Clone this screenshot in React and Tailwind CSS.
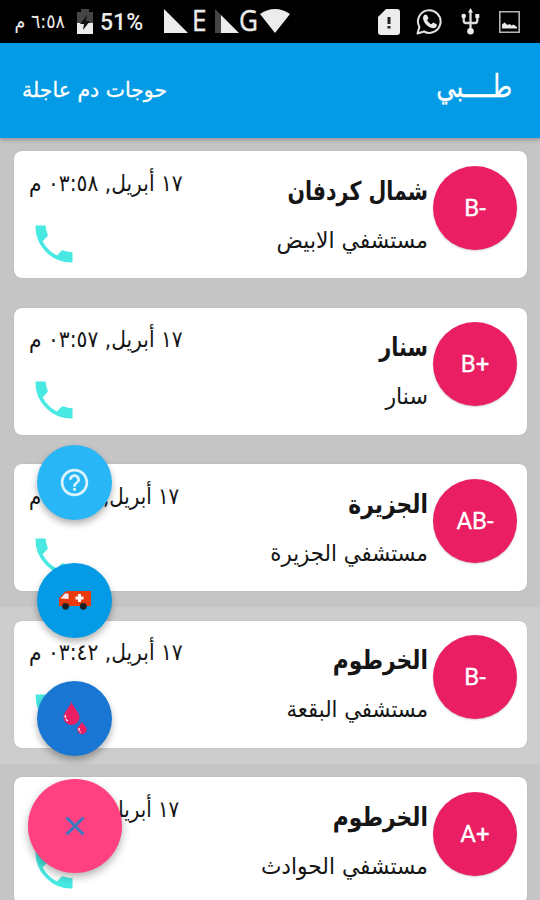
import React from 'react';
import { MdHelpOutline } from 'react-icons/md';

const requests = [
  { type: 'B-', state: 'شمال كردفان', stateFit: 'scale-x-[0.79]', hospital: 'مستشفي الابيض', hospitalFit: 'scale-x-[0.95]', date: '١٧ أبريل, ٠٣:٥٨ م' },
  { type: 'B+', state: 'سنار', stateFit: 'scale-x-[0.8]', hospital: 'سنار', hospitalFit: 'scale-x-[0.96]', date: '١٧ أبريل, ٠٣:٥٧ م' },
  { type: 'AB-', state: 'الجزيرة', stateFit: 'scale-x-[0.84]', hospital: 'مستشفي الجزيرة', hospitalFit: 'scale-x-[0.925]', date: '١٧ أبريل, ٠٣:٤٥ م', dateFit: 'scale-x-[0.86]' },
  { type: 'B-', state: 'الخرطوم', stateFit: 'scale-x-[0.84]', hospital: 'مستشفي البقعة', hospitalFit: 'scale-x-[0.92]', date: '١٧ أبريل, ٠٣:٤٢ م', pressed: true },
  { type: 'A+', state: 'الخرطوم', stateFit: 'scale-x-[0.84]', hospital: 'مستشفي الحوادث', hospitalFit: 'scale-x-[0.945]', date: '١٧ أبريل, ٠٣:٤٠ م', dateFit: 'scale-x-[0.86]' },
];

const BatteryIcon = () => (
  <svg width="18" height="26" viewBox="0 0 18 26" className="ml-[11px]">
    <path d="M5 0h8v3h4v11H1V3h4z" fill="#454545" />
    <path d="M1 14h16v11H1z" fill="#ececec" />
    <path d="M11 6 4 15h4l-1 6 7-9h-4z" fill="#111" />
  </svg>
);

const SignalIcon = () => (
  <svg width="24" height="24" viewBox="0 0 24 24" className="-mt-[2px] ml-[20px]">
    <path d="M0 0v24h24z" fill="#ececec" />
  </svg>
);

const WeakSignalIcon = () => (
  <svg width="24" height="24" viewBox="0 0 24 24" className="-mt-[2px] ml-[8px]">
    <path d="M0 0v24h6V6z" fill="#454545" />
    <path d="M6 6v18h18z" fill="#ececec" />
  </svg>
);

const WifiIcon = () => (
  <svg width="30" height="24" viewBox="0 0 30 24" className="-mt-[1px] -ml-[3px]">
    <path d="M0 5Q15-5 30 5L15 24z" fill="#ececec" />
  </svg>
);

const SimAlertIcon = () => (
  <svg width="22" height="26" viewBox="0 0 22 26">
    <path d="M8 0h11q3 0 3 3v20q0 3-3 3H3q-3 0-3-3V8z" fill="#ececec" />
    <path d="M9.500 8h3v7h-3zM9.500 17h3v2.500h-3z" fill="#222" />
  </svg>
);

const WhatsAppIcon = () => (
  <svg width="27" height="27" viewBox="0 0 27 27" className="ml-[16px]">
    <path d="M1.500 25.500 3.400 19A11.300 11.300 0 1 1 8 23.500z" fill="none" stroke="#e4e4e4" strokeWidth="2" strokeLinejoin="round" />
    <path d="M8.500 6.800h2.300l1.700 3.500-1.500 2q1.500 2.600 4.300 4l1.900-1.800 3.500 1.700v2.200q-1.400 2-3.800 1.800-7.400-1.500-9.900-9.300-.3-2.600 1.500-4.100z" fill="#ececec" />
  </svg>
);

const UsbIcon = () => (
  <svg width="19" height="27" viewBox="0 0 19 27" className="ml-[18px]">
    <path d="M9.500 3v20M2.700 8v4.500q0 2.500 2.300 2.500h9q2.300 0 2.300-2.500V8" fill="none" stroke="#dcdcdc" strokeWidth="2.300" />
    <path d="M9.500 0 12 4.500H7z" fill="#ececec" />
    <circle cx="2.700" cy="8" r="2.300" fill="#ececec" />
    <path d="M14.300 6h4v4h-4z" fill="#ececec" />
    <circle cx="9.500" cy="23.300" r="3.300" fill="#ececec" />
  </svg>
);

const PictureIcon = () => (
  <svg width="21" height="22" viewBox="0 0 21 22" className="ml-[19px]">
    <path d="M.8.800h19.400v20.400H.8z" fill="none" stroke="#b5b5b5" strokeWidth="1.600" />
    <path d="M3 17.500v-4l2.500-2 3 2.500 2-1 2 1.500 2-1 3.500 2.500v1.500z" fill="#ececec" />
  </svg>
);

const PhoneIcon = () => (
  <svg width="38" height="38" viewBox="0 0 38 38" className="mt-[25px] ml-[6px] shrink-0">
    <path d="M.5.500H10.500Q10.700 5 12.800 9.800Q12.800 11 12 11.800L7.600 16.200Q12.600 25.800 22 30.400L26.200 26Q27.200 25 28.400 25.400Q33 27 37.500 27.300V37.600Q22 38 11 27T.500.500z" fill="#47e9e2" />
  </svg>
);

const AmbulanceIcon = () => (
  <svg width="32" height="22" viewBox="0 0 32 22">
    <path d="M0 17V9l6-6q1-1 3-1h23v15z" fill="#e93a10" />
    <path d="M1.500 9.500 6 4.500h3.500v5.500z" fill="#f4e9f2" />
    <path d="M19 5h3v2.500h2.500v3H22V13h-3v-2.500h-2.500v-3H19z" fill="#fff" />
    <circle cx="6.500" cy="17.300" r="3.400" fill="#202124" />
    <circle cx="24.300" cy="17.300" r="3.400" fill="#202124" />
  </svg>
);

const BloodIcon = () => (
  <svg width="24" height="34" viewBox="0 0 24 34">
    <path d="M8.500.500C10 6.500 16.500 11 16.500 16.500a8 7.500 0 0 1-16 0C.5 11 7 6.500 8.500.500z" fill="#e91e63" />
    <path d="M19 20.500c.7 3 4.700 4.700 4.700 8a4.700 4.700 0 0 1-9.400 0c0-3.300 4-5 4.700-8z" fill="#e91e63" />
    <path d="M2.300 14q-.3 4.800 3.300 6.500M16 27q-.3 3 2 4.300" fill="none" stroke="#f6d5e6" strokeWidth="1.500" strokeDasharray="3 1" />
  </svg>
);

const CloseIcon = () => (
  <svg width="20" height="20" viewBox="0 0 20 20">
    <path d="M1.500 1.500l17 17M18.500 1.500l-17 17" stroke="#3b78c0" strokeWidth="3" />
  </svg>
);

const StatusBar = () => (
  <div className="flex h-[43px] items-center justify-between bg-black pl-[14px] pr-[20px] text-[#ececec]">
    <div className="flex items-center">
      <span dir="rtl" className="w-[51px] origin-right whitespace-nowrap text-[19px] scale-x-[0.92]">٦:٥٨ م</span>
      <BatteryIcon />
      <span className="ml-[6px] mt-[4px] w-[44px] font-[Roboto] text-[23px] font-medium">51%</span>
      <SignalIcon />
      <span className="-mt-[3px] ml-[4px] w-[15px] font-['Open_Sans'] text-[29px] leading-[40px] [-webkit-text-stroke:0.4px] origin-left scale-x-90">E</span>
      <WeakSignalIcon />
      <span className="-mt-[3px] w-[24px] font-['Open_Sans'] text-[29px] leading-[40px] [-webkit-text-stroke:0.4px] origin-left scale-x-90">G</span>
      <WifiIcon />
    </div>
    <div className="flex items-center">
      <SimAlertIcon />
      <WhatsAppIcon />
      <UsbIcon />
      <PictureIcon />
    </div>
  </div>
);

const Toolbar = () => (
  <header className="relative flex h-[95px] items-center justify-between bg-[#039be5] pl-[22px] pr-[28px] text-white shadow-[0_2px_4px_rgba(0,0,0,0.25)]">
    <h1 className="-mt-[8px] origin-right whitespace-nowrap text-[31px] scale-x-[0.79] [-webkit-text-stroke:0.3px]">طــــبي</h1>
    <span className="origin-left whitespace-nowrap text-[21px] scale-x-[0.975] [-webkit-text-stroke:0.3px]">حوجات دم عاجلة</span>
  </header>
);

const RequestCard = ({ request }) => (
  <li className={`h-[156.4px] px-[13.5px] pt-[13.4px] ${request.pressed ? 'bg-[#cdcdcd]' : ''}`}>
    <div className="flex h-[127px] rounded-[8px] bg-white pr-[9.500px] pt-[14.600px] shadow-[0_0_1px_rgba(0,0,0,0.25)]">
      <div dir="ltr" className="flex h-[84px] w-[84px] items-center justify-center rounded-full bg-[#e91e63] font-[Roboto] text-[24px] text-white shadow-[0_1px_2px_rgba(0,0,0,0.2)] [-webkit-text-stroke:0.3px]">
        {request.type}
      </div>
      <div className="flex flex-1 flex-col pr-[5.5px]">
        <h2 className={`mt-[6px] origin-right whitespace-nowrap text-[26px] font-bold leading-[38px] ${request.stateFit}`}>{request.state}</h2>
        <p className={`mt-[10px] origin-right whitespace-nowrap text-[23px] leading-[40px] ${request.hospitalFit}`}>{request.hospital}</p>
      </div>
      <div dir="ltr" className="flex w-[182px] flex-col items-start pl-[15px]">
        <time dir="rtl" className={`origin-left whitespace-nowrap text-[23px] leading-[34px] ${request.dateFit || 'scale-x-[0.88]'}`}>{request.date}</time>
        <PhoneIcon />
      </div>
    </div>
  </li>
);

const FloatingMenu = () => (
  <div className="absolute left-[27.5px] top-[444.5px] flex w-[94px] flex-col items-center">
    <button className="flex h-[75px] w-[75px] items-center justify-center rounded-full bg-[#29b6f6] text-[#d9f4ff] shadow-[0_4px_7px_rgba(0,0,0,0.3)]">
      <MdHelpOutline size={33} />
    </button>
    <button className="mt-[43px] flex h-[75px] w-[75px] items-center justify-center rounded-full bg-[#039be5] shadow-[0_4px_7px_rgba(0,0,0,0.3)]">
      <AmbulanceIcon />
    </button>
    <button className="mt-[43px] flex h-[75px] w-[75px] items-center justify-center rounded-full bg-[#1976d2] shadow-[0_4px_7px_rgba(0,0,0,0.3)]">
      <BloodIcon />
    </button>
    <button className="mt-[23px] flex h-[94px] w-[94px] items-center justify-center rounded-full bg-[#ff4081] shadow-[0_4px_8px_rgba(0,0,0,0.3)]">
      <CloseIcon />
    </button>
  </div>
);

const App = () => (
  <div className="relative h-[900px] w-[540px] overflow-hidden bg-[#c5c5c5] font-['DejaVu_Sans',sans-serif] text-[#151515]">
    <StatusBar />
    <div dir="rtl">
      <Toolbar />
      <ul>
        {requests.map((request, i) => (
          <RequestCard key={i} request={request} />
        ))}
      </ul>
    </div>
    <FloatingMenu />
  </div>
);

export default App;
